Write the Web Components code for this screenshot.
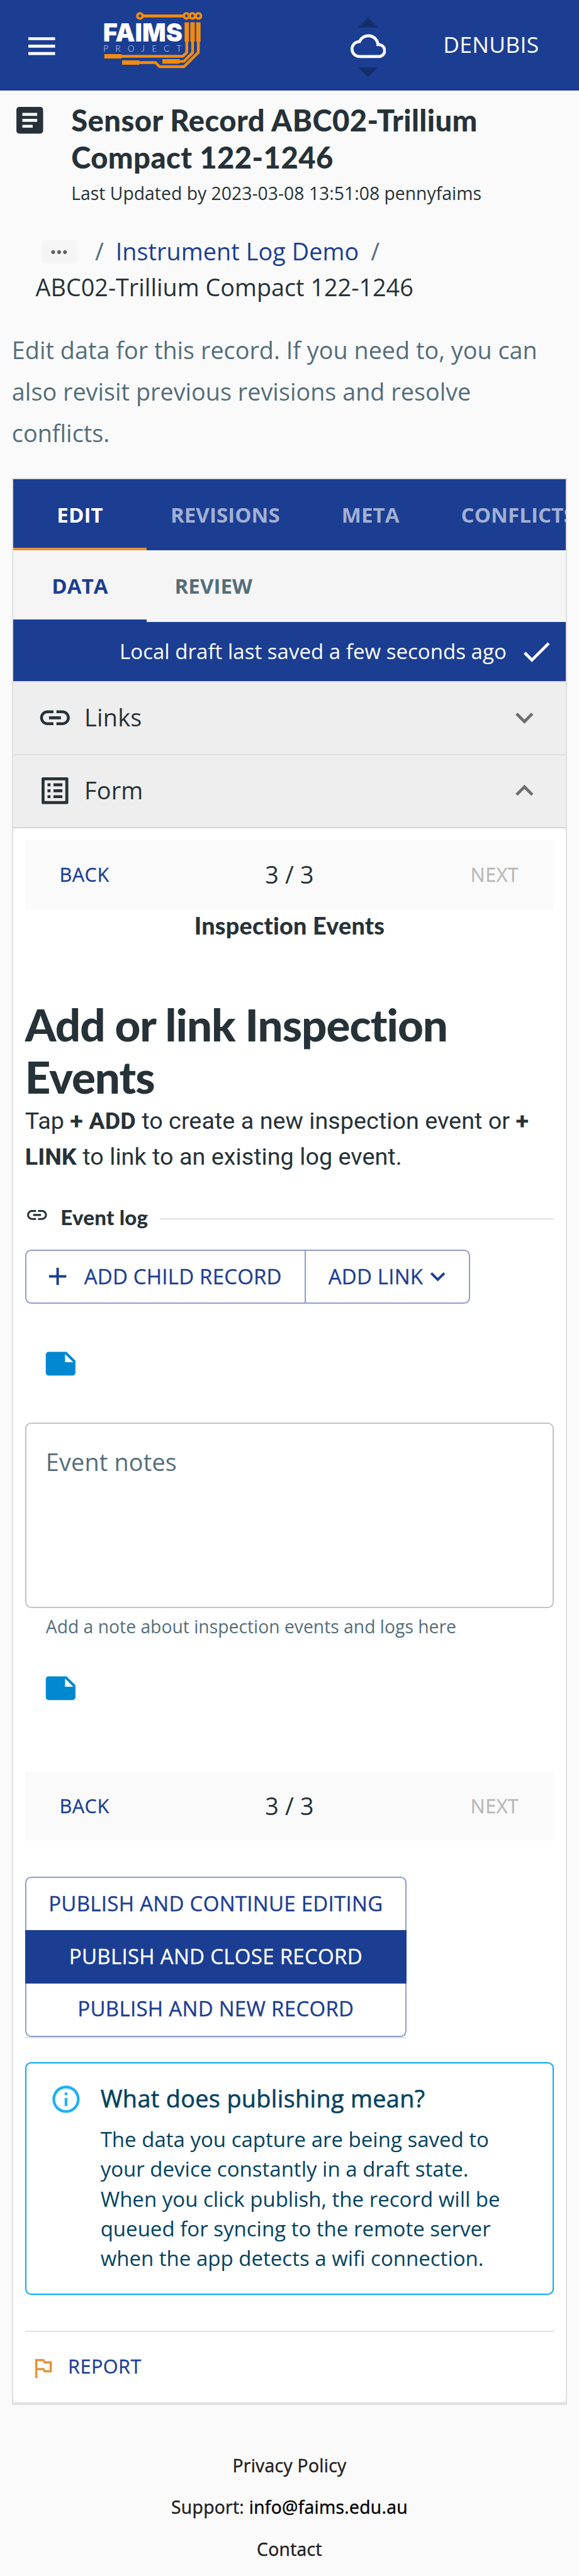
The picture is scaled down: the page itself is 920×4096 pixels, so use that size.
<!DOCTYPE html>
<html lang="en">
<head>
<meta charset="utf-8">
<title>FAIMS Project - Sensor Record ABC02-Trillium Compact 122-1246</title>
<style>
html{margin:0;height:4096px;overflow:hidden;background:#fafafa}
body{margin:0;width:390px;zoom:2.358974;font-family:"Open Sans",sans-serif;font-size:16px;letter-spacing:.01px;color:#263238;background:#fafafa;--blue:#1b3e93}
</style>
</head>
<body>
<app-header user="DENUBIS"></app-header>
<record-title>
  Sensor Record ABC02-Trillium<br>Compact 122-1246
  <span slot="sub">Last Updated by 2023-03-08 13:51:08 pennyfaims</span>
</record-title>
<crumb-trail>
  <span slot="link">Instrument Log Demo</span>
  <span>ABC02-Trillium Compact 122-1246</span>
</crumb-trail>
<page-intro>Edit data for this record. If you need to, you can<br>also revisit previous revisions and resolve<br>conflicts.</page-intro>
<record-card>
  <tab-strip slot="head" tone="dark" items="EDIT,REVISIONS,META,CONFLICTS"></tab-strip>
  <tab-strip slot="head" tone="light" items="DATA,REVIEW"></tab-strip>
  <draft-status slot="head">Local draft last saved a few seconds ago</draft-status>
  <accordion-row slot="head" icon="link" arrow="down">Links</accordion-row>
  <accordion-row slot="head" icon="list" arrow="up">Form</accordion-row>
  <step-nav></step-nav>
  <section-heading kind="small">Inspection Events</section-heading>
  <section-heading kind="large">Add or link Inspection<br>Events</section-heading>
  <help-text>Tap <b>+ ADD</b> to create a new inspection event or <b>+<br>LINK</b> to link to an existing log event.</help-text>
  <field-legend>Event log</field-legend>
  <link-buttons></link-buttons>
  <note-mark style="margin-top:28.5px"></note-mark>
  <notes-field label="Event notes">Add a note about inspection events and logs here</notes-field>
  <note-mark style="margin-top:19.7px"></note-mark>
  <step-nav style="margin-top:44px"></step-nav>
  <publish-buttons></publish-buttons>
  <info-alert>
    <span slot="title">What does publishing mean?</span>
    The data you capture are being saved to<br>your device constantly in a draft state.<br>When you click publish, the record will be<br>queued for syncing to the remote server<br>when the app detects a wifi connection.
  </info-alert>
  <report-bar>REPORT</report-bar>
</record-card>
<page-footer></page-footer>

<script>
const ICONS = {
  menu: 'M3 18h18v-2H3v2zm0-5h18v-2H3v2zm0-7v2h18V6H3z',
  cloud: 'M19.35 10.04C18.67 6.59 15.64 4 12 4 9.11 4 6.6 5.64 5.35 8.04 2.34 8.36 0 10.91 0 14c0 3.31 2.69 6 6 6h13c2.76 0 5-2.24 5-5 0-2.64-2.05-4.78-4.65-4.96zM19 18H6c-2.21 0-4-1.79-4-4s1.79-4 4-4h.71C7.37 7.69 9.48 6 12 6c3.04 0 5.5 2.46 5.5 5.5v.5H19c1.66 0 3 1.34 3 3s-1.34 3-3 3z',
  article: 'M19 3H5c-1.1 0-2 .9-2 2v14c0 1.1.9 2 2 2h14c1.1 0 2-.9 2-2V5c0-1.1-.9-2-2-2zm-5 14H7v-2h7v2zm3-4H7v-2h10v2zm0-4H7V7h10v2z',
  more: 'M6 10c-1.1 0-2 .9-2 2s.9 2 2 2 2-.9 2-2-.9-2-2-2zm12 0c-1.1 0-2 .9-2 2s.9 2 2 2 2-.9 2-2-.9-2-2-2zm-6 0c-1.1 0-2 .9-2 2s.9 2 2 2 2-.9 2-2-.9-2-2-2z',
  check: 'M9 16.17L4.83 12l-1.42 1.41L9 19 21 7l-1.41-1.41z',
  link: 'M3.9 12c0-1.71 1.39-3.1 3.1-3.1h4V7H7c-2.76 0-5 2.24-5 5s2.24 5 5 5h4v-1.9H7c-1.71 0-3.1-1.39-3.1-3.1zM8 13h8v-2H8v2zm9-6h-4v1.9h4c1.71 0 3.1 1.39 3.1 3.1s-1.39 3.1-3.1 3.1h-4V17h4c2.76 0 5-2.24 5-5s-2.24-5-5-5z',
  list: 'M19 5v14H5V5h14m1.1-2H3.9c-.5 0-.9.4-.9.9v16.2c0 .4.4.9.9.9h16.2c.4 0 .9-.5.9-.9V3.9c0-.5-.5-.9-.9-.9zM11 7h6v2h-6V7zm0 4h6v2h-6v-2zm0 4h6v2h-6zM7 7h2v2H7zm0 4h2v2H7zm0 4h2v2H7z',
  down: 'M16.59 8.59L12 13.17 7.41 8.59 6 10l6 6 6-6z',
  up: 'M12 8l-6 6 1.41 1.41L12 10.83l4.59 4.58L18 14z',
  add: 'M19 13h-6v6h-2v-6H5v-2h6V5h2v6h6v2z',
  note: 'M22 10l-6-6H4c-1.1 0-2 .9-2 2v12.01c0 1.1.9 1.99 2 1.99l16-.01c1.1 0 2-.89 2-1.99v-8zm-7-4.5l5.5 5.5H15V5.5z',
  info: 'M11 7h2v2h-2zM11 11h2v6h-2zM12 2C6.48 2 2 6.48 2 12s4.48 10 10 10 10-4.48 10-10S17.52 2 12 2zm0 18c-4.41 0-8-3.59-8-8s3.59-8 8-8 8 3.59 8 8-3.59 8-8 8z',
  flag: 'M14 6l-1-2H5v17h2v-7h5l1 2h7V6h-6zm4 8h-4l-1-2H7V6h5l1 2h5v6z'
};

function define(name, css, html) {
  customElements.define(name, class extends HTMLElement {
    constructor() {
      super();
      this.attachShadow({mode: 'open'});
    }
    connectedCallback() {
      const body = typeof html === 'function' ? html(this) : html;
      this.shadowRoot.innerHTML = '<style>*{box-sizing:border-box}:host{display:block;box-sizing:border-box}' + css + '</style>' + body;
    }
  });
}

define('md-icon', ':host{flex:none}svg{display:block;fill:currentColor}', el => {
  const s = el.getAttribute('size') || 24;
  return `<svg width="${s}" height="${s}" viewBox="0 0 24 24"><path d="${ICONS[el.getAttribute('name')]}"/></svg>`;
});

define('faims-logo', 'svg{display:block}.w{font:900 154px Inter,sans-serif;letter-spacing:0;fill:#fff}.p{font:300 52px Lato,sans-serif;letter-spacing:0;fill:#d3daec}', `
<svg width="80" height="50" viewBox="0 0 720 450">
  <g fill="none" stroke="#f28c0f">
    <path stroke-width="18" d="M298 66H545"/>
    <g stroke-width="15"><circle cx="280" cy="66" r="16"/><circle cx="562" cy="66" r="16"/><circle cx="598" cy="66" r="16"/><circle cx="634" cy="66" r="16"/></g>
    <path stroke-width="27" d="M564 105V222M599 105V222M634 105V222M64 311H168M172 349H276M416 342H521"/>
    <path stroke-width="17" d="M564 220V287L540 311H166M599 220V289L546 342H519M634 220V287L547 374H399L374 349H274"/>
  </g>
  <text class="w" x="56" y="220" textLength="482" lengthAdjust="spacingAndGlyphs">FAIMS</text>
  <text class="p" x="58" y="282" textLength="474">PROJECT</text>
</svg>`);

define('app-header', `
:host{height:61px;background:var(--blue);color:#fff;display:flex;align-items:flex-start;padding-left:16px}
.menu{margin-top:19px}
faims-logo{margin:3.33px 0 0 23.33px}
.sync{margin:12px 0 0 92.67px;width:24px;display:flex;flex-direction:column;align-items:center}
.sync svg{display:block;fill:#152f6c}
.sync md-icon{margin:.3px 0 2.3px}
.user{margin:18px 0 0 38.6px;font-size:15px;line-height:24px;letter-spacing:.13px}`,
el => `<md-icon class="menu" name="menu"></md-icon><faims-logo></faims-logo>
<div class="sync"><svg width="13.3" height="6.7" viewBox="0 0 10 5"><path d="M0 5L5 0l5 5z"/></svg><md-icon name="cloud"></md-icon><svg width="13.3" height="6.7" viewBox="0 0 10 5"><path d="M0 0l5 5 5-5z"/></svg></div>
<div class="user">${el.getAttribute('user')}</div>`);

define('record-title', `
:host{display:flex;padding:8px 8px 0}
md-icon{margin-right:16px}
.t{font:900 20px/25px Lato,sans-serif;letter-spacing:.0093em;margin-top:-.2px}
.s{font-size:12px;line-height:20px;letter-spacing:.013px;margin-top:1.5px}`,
`<md-icon name="article"></md-icon><div><div class="t"><slot></slot></div><div class="s"><slot name="sub"></slot></div></div>`);

define('crumb-trail', `
:host{padding:17.5px 0 0 24px;line-height:24px}
.r{display:flex;align-items:center}
.b{width:24px;height:16px;margin:0 4px;border-radius:2px;background:#f5f5f5;color:#616161;display:flex;align-items:center;justify-content:center}
i{font-style:normal;margin:0 8px;color:#546e7a}
.l{color:var(--blue);letter-spacing:.035px}`,
`<div class="r"><span class="b"><md-icon name="more" size="16"></md-icon></span><i>/</i><span class="l"><slot name="link"></slot></span><i>/</i></div><div><slot></slot></div>`);

define('page-intro', ':host{padding:16.2px 8px 0;line-height:28px;color:#546e7a;white-space:nowrap}', '<slot></slot>');

define('record-card', `
:host{margin:16.3px 8px 0;border:1px solid #e0e0e0;background:#f5f5f5}
.f{height:1062px;border-bottom:1px solid #e0e0e0;background:#f5f5f5}
.p{height:1061px;padding:8.2px 8px 8px;background:#fff;border-radius:4px}`,
'<slot name="head"></slot><div class="f"><div class="p"><slot></slot></div></div>');

define('tab-strip', `
:host{display:flex;height:48px;overflow:hidden;font-size:14px;font-weight:700;letter-spacing:.04px;line-height:17.5px}
:host([tone=dark]){background:var(--blue);color:rgba(255,255,255,.6);--on:#fff;--bar:#e69337}
:host([tone=light]){background:#f5f5f5;color:#546e7a;--on:var(--blue);--bar:var(--blue)}
span{flex:none;min-width:90px;padding:0 16px;display:flex;align-items:center;justify-content:center;border:solid transparent;border-width:2px 0}
span:first-of-type{color:var(--on);border-bottom-color:var(--bar)}`,
el => el.getAttribute('items').split(',').map(t => `<span>${t}</span>`).join(''));

define('draft-status', `
:host{display:flex;height:40px;align-items:center;justify-content:flex-end;padding-right:8px;background:var(--blue);color:#fff;font-size:14px;line-height:20px}
md-icon{margin-left:8px}`,
'<span><slot></slot></span><md-icon name="check"></md-icon>');

define('accordion-row', `
:host{display:flex;align-items:center;height:49px;padding:0 16px;background:#eee;border-top:1px solid #e0e0e0}
:host([arrow=up]){height:50px;border-bottom:1px solid #d6d6d6}
.t{flex:1;margin-left:8px;line-height:24px;letter-spacing:.1px}
.a{color:#6e6e6e}`,
el => `<md-icon name="${el.getAttribute('icon')}"></md-icon><span class="t"><slot></slot></span><md-icon class="a" name="${el.getAttribute('arrow')}"></md-icon>`);

define('step-nav', `
:host{display:flex;justify-content:space-between;align-items:center;height:46.75px;padding:8px;background:#fafafa}
span{width:64px;text-align:center;font-size:13px;line-height:22.75px;letter-spacing:.2px;-webkit-text-stroke:.12px;color:var(--blue)}
div{letter-spacing:.08px}
.n{color:#b8b8b8}`,
'<span>BACK</span><div>3 / 3</div><span class="n">NEXT</span>');

define('section-heading', `
:host{font-family:Lato,sans-serif;font-weight:900;letter-spacing:.00625em}
:host([kind=small]){font-size:16px;line-height:22px;text-align:center}
:host([kind=large]){font-size:30px;line-height:35px;margin-top:38.2px;letter-spacing:-.0135em}`, '<slot></slot>');

define('help-text', ':host{font-family:Roboto,sans-serif;line-height:24px;margin-top:.4px;white-space:nowrap}', '<slot></slot>');

define('field-legend', `
:host{display:flex;align-items:center;margin-top:19px;font:900 14px/20px Lato,sans-serif;letter-spacing:.1px}
md-icon{margin:-3px 8px 0 0}
b{font-weight:900}
hr{flex:1;border:0;height:1px;background:#e0e0e0;margin:2px 0 0 8px}`,
'<md-icon name="link" size="16"></md-icon><b><slot></slot></b><hr>');

define('link-buttons', `
:host{display:flex;margin-top:11.5px;color:var(--blue);font-size:14px;line-height:24.5px;letter-spacing:.08px;-webkit-text-stroke:.12px}
div{display:flex;align-items:center;height:36.5px;padding:0 15px;border:1px solid #8d9ec9}
.l{width:188.5px;border-radius:4px 0 0 4px;border-right:0}
.r{width:111.5px;border-radius:0 4px 4px 0;padding-right:11px}
.l md-icon{margin:0 8px 0 -4px}`,
'<div class="l"><md-icon name="add" size="20"></md-icon>ADD CHILD RECORD</div><div class="r">ADD LINK<md-icon name="down" size="20"></md-icon></div>');

define('note-mark', ':host{padding-left:12px;color:#0288d1}', '<md-icon name="note"></md-icon>');

define('notes-field', `
:host{margin-top:28px;color:#546e7a}
.b{height:125px;border:1px solid #c4c4c4;border-radius:4px;padding:14px 13.2px;line-height:24px;letter-spacing:.09px}
.h{margin:2.3px 14px 0;font-size:12px;line-height:20px;letter-spacing:0}`,
el => `<div class="b">${el.getAttribute('label')}</div><div class="h"><slot></slot></div>`);

define('publish-buttons', `
:host{margin-top:24.2px;width:257px;border-bottom:1px solid #e0e0e0;color:var(--blue);font-size:14px;letter-spacing:.12px;-webkit-text-stroke:.15px;text-align:center}
div{height:36px;line-height:34px;border:1px solid #8d9ec9}
.a{border-bottom:0;border-radius:4px 4px 0 0;line-height:35px}
.m{background:var(--blue);border-color:var(--blue);color:#fff}
.z{border-top:0;border-radius:0 0 4px 4px}`,
'<div class="a">PUBLISH AND CONTINUE EDITING</div><div class="m">PUBLISH AND CLOSE RECORD</div><div class="z">PUBLISH AND NEW RECORD</div>');

define('info-alert', `
:host{display:flex;margin-top:16.1px;height:157px;padding:13px 16px;border:1px solid #03a9f4;border-radius:4px;color:#014361}
md-icon{color:#1cb2f5;margin:0 12px 0 0}
.t{line-height:24px;margin-top:-1.2px;letter-spacing:.16px;-webkit-text-stroke:.25px}
.b{font-size:14px;line-height:20px;letter-spacing:0;margin-top:5.5px;white-space:nowrap}`,
'<md-icon name="info" size="22"></md-icon><div><div class="t"><slot name="title"></slot></div><div class="b"><slot></slot></div></div>');

define('report-bar', `
:host{display:flex;align-items:center;margin-top:24px;border-top:1px solid #e0e0e0;padding:12px 3px 0;color:var(--blue);font-size:13px;line-height:22.75px;letter-spacing:.18px;-webkit-text-stroke:.12px}
md-icon{color:#e69337;margin:2px 8px 0 0}`,
'<md-icon name="flag" size="18"></md-icon><slot></slot>');

define('page-footer', `
:host{margin-top:27px;text-align:center;font-size:12px;line-height:28px;letter-spacing:.13px;-webkit-text-stroke:.2px;color:#212121;padding-bottom:5px}
a{color:#000}`,
'<div>Privacy Policy</div><div>Support: <a>info@faims.edu.au</a></div><div>Contact</div>');
</script>
</body>
</html>
